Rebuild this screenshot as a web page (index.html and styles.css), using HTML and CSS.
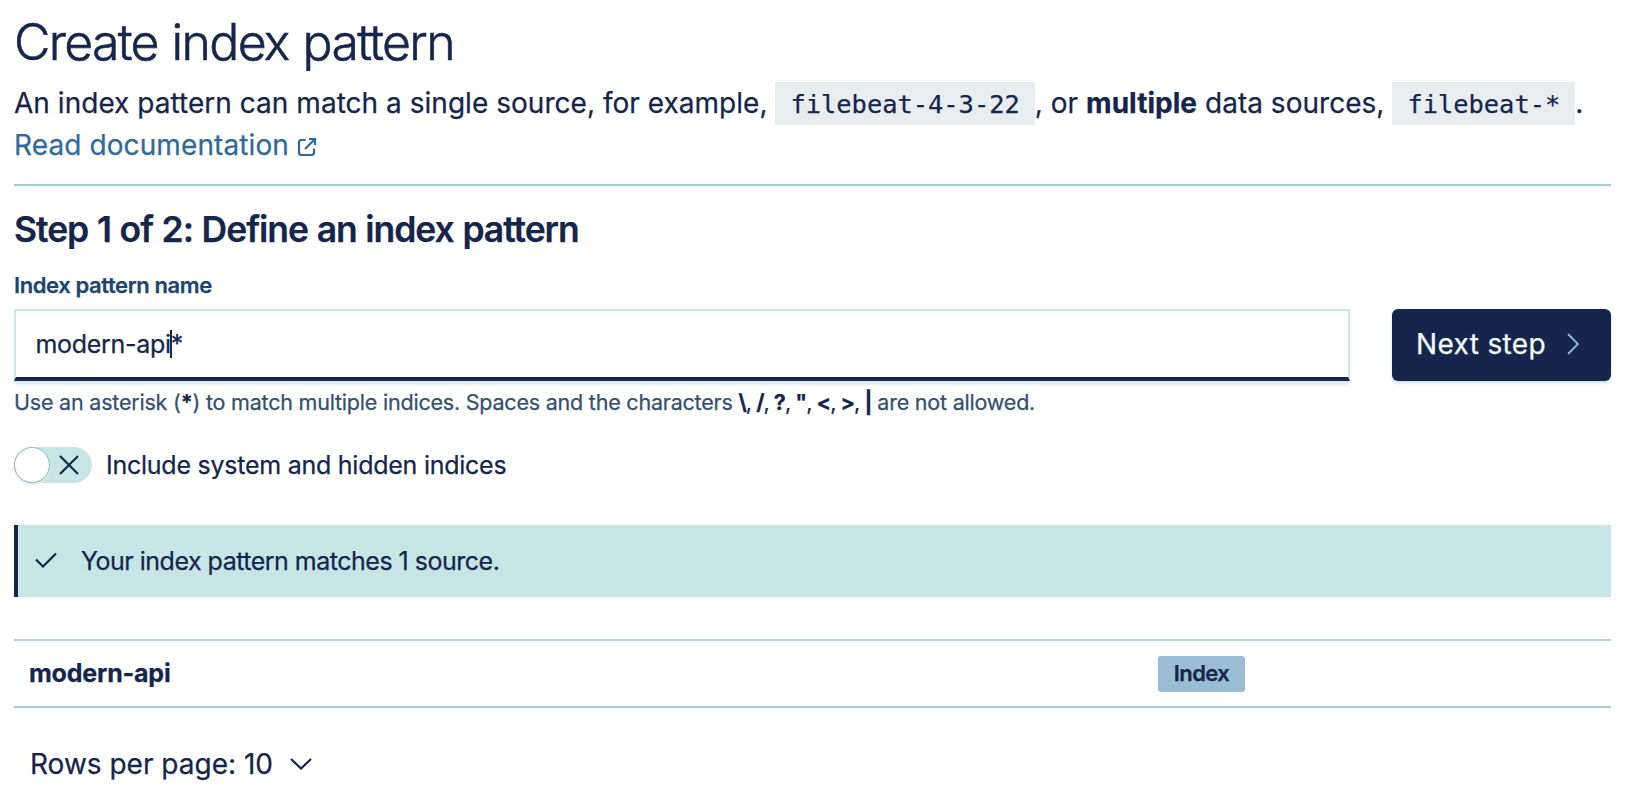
FILE: index.html
```html
<!DOCTYPE html>
<html lang="en">
<head>
<meta charset="utf-8">
<title>Create index pattern</title>
<link rel="stylesheet" href="styles.css">
</head>
<body>
<main class="page">
  <h1 class="title">Create index pattern</h1>
  <p class="intro"><span class="intro-a">An index pattern can match a single source, for example, </span><code class="code">filebeat-4-3-22</code><span class="intro-b">, or <strong>multiple</strong> data sources, </span><code class="code">filebeat-*</code>.<br><a class="link">Read documentation<svg class="popout" viewBox="0 0 20 20" width="20" height="20"><path d="M8.5 3H4.5Q2 3 2 5.500V15.500Q2 18 4.500 18H14.500Q17 18 17 15.500V11.500M8 12 17.500 2.500M12 2H18V8"/></svg></a></p>
  <div class="rule"></div>
  <h2 class="step">Step 1 of 2: Define an index pattern</h2>
  <div class="label">Index pattern name</div>
  <div class="form-row">
    <div class="input"><span>modern-api</span><i class="caret"></i><span>*</span></div>
    <div class="button"><span>Next step</span><svg viewBox="0 0 12 22" width="12" height="22"><path d="M1 1 11 11 1 21"/></svg></div>
  </div>
  <p class="help">Use an asterisk (<strong>*</strong>) to match multiple indices. Spaces and the characters <span class="chars"><strong>\</strong>, <strong>/</strong>, <strong>?</strong>, <strong>"</strong>, <strong>&lt;</strong>, <strong>&gt;</strong>, <strong>|</strong></span> are not allowed.</p>
  <div class="switch-row">
    <div class="switch"><span class="thumb"></span><svg viewBox="0 0 20 20" width="20" height="20"><path d="M1 1 19 19M19 1 1 19"/></svg></div>
    <span class="switch-label">Include system and hidden indices</span>
  </div>
  <div class="callout">
    <svg viewBox="0 0 22 16" width="22" height="16"><path d="M1 7.500 8 14.500 21 1.500"/></svg>
    <span>Your index pattern matches 1 source.</span>
  </div>
  <div class="table-row">
    <span class="name">modern-api</span>
    <span class="cell"><span class="badge">Index</span></span>
  </div>
  <div class="pager">
    <span>Rows per page: 10</span>
    <svg viewBox="0 0 22 12" width="22" height="12"><path d="M1 1 11 10.500 21 1"/></svg>
  </div>
</main>
</body>
</html>
```
FILE: styles.css
```css
* { box-sizing: border-box; }
body { margin: 0; background: #fff; color: #16254c; font-family: Inter, "Liberation Sans", sans-serif; -webkit-text-stroke: 0.25px currentColor; }
h1, h2, p { margin: 0; }
svg { fill: none; stroke: #16254c; stroke-width: 2.200; flex: none; }
.page { padding: 12px 15px 0 14px; white-space: nowrap; }
.title { font-size: 50px; line-height: 60px; font-weight: 300; letter-spacing: -1.7px; word-spacing: 1.5px; font-feature-settings: "calt" 0; -webkit-text-stroke-width: 0.6px; }
.intro { margin-top: 10px; font-size: 28px; line-height: 42px; letter-spacing: 0.03px; }
.intro strong { font-weight: 700; }
.code { font-family: "DejaVu Sans Mono", monospace; font-size: 25.4px; line-height: 1; letter-spacing: 0; padding: 7px 15px 5.500px; }
.code { background: #e8edf0; }
.link { color: #31699d; letter-spacing: 0.1px; }
.popout { margin-left: 8px; vertical-align: -2px; stroke: #31699d; }
.rule { margin-top: 18px; height: 2px; background: #a4cad8; }
.step { margin-top: 22px; font-size: 35.5px; line-height: 44px; font-weight: 600; letter-spacing: -1.05px; word-spacing: 0.8px; font-feature-settings: "calt" 0; }
.label { margin-top: 19px; margin-bottom: 10px; font-size: 22px; line-height: 28px; font-weight: 600; letter-spacing: -0.4px; color: #1c4473; }
.form-row { display: flex; gap: 42px; }
.input { flex: 1; height: 72px; display: flex; align-items: center; padding: 0 19.5px; font-size: 25px; letter-spacing: -0.3px; border: 2px solid #cfe6e8; border-bottom: 4px solid #16254c; box-shadow: 0 5px 3px -1px #e2eaed; }
.caret { width: 2px; height: 28px; margin: 0 -1px; background: #16254c; }
.button { width: 219px; height: 72px; display: flex; align-items: center; justify-content: space-between; padding: 0 32px 2px 24px; border-radius: 6px; background: #16254c; color: #f4fbfd; font-size: 28px; letter-spacing: 0.35px; box-shadow: 0 2px 3px #c7dfe5; }
.button svg { stroke: #8bbbd8; stroke-width: 1.800; }
.help { margin-top: 6px; font-size: 21.500px; line-height: 30px; letter-spacing: -0.21px; color: #35506f; }
.help strong { color: #16254c; }
.chars { letter-spacing: -0.96px; color: #16254c; }
.switch-row { display: flex; align-items: center; gap: 14px; margin-top: 30px; height: 36px; font-size: 25px; letter-spacing: -0.25px; }
.switch { display: flex; align-items: center; gap: 9px; width: 78px; height: 36px; border-radius: 18px; background: #c7e5e5; }
.thumb { width: 36px; height: 36px; border-radius: 50%; border: 1.500px solid #8eb3ca; background: #fff; box-shadow: 0 2px 2px #dfe9ed; }
.callout { display: flex; align-items: center; gap: 24px; margin-top: 42px; height: 72px; padding-left: 17px; border-left: 4px solid #16254c; background: #c7e5e5; font-size: 25px; letter-spacing: -0.5px; }
.callout svg { margin-bottom: 3px; }
.table-row { display: flex; align-items: center; margin-top: 42px; height: 69px; padding-left: 15px; border-top: 2px solid #b4d4de; border-bottom: 2px solid #a4cad8; }
.name { width: 1129px; padding-bottom: 2px; font-size: 25px; font-weight: 700; letter-spacing: -0.2px; }
.badge { display: block; width: 87px; height: 36px; line-height: 35px; border-radius: 3px; background: #9abcd4; text-align: center; font-size: 22px; font-weight: 600; letter-spacing: -0.6px; }
.pager { display: flex; align-items: center; gap: 17px; margin-top: 36px; padding-left: 16px; height: 40px; font-size: 28px; }
```
